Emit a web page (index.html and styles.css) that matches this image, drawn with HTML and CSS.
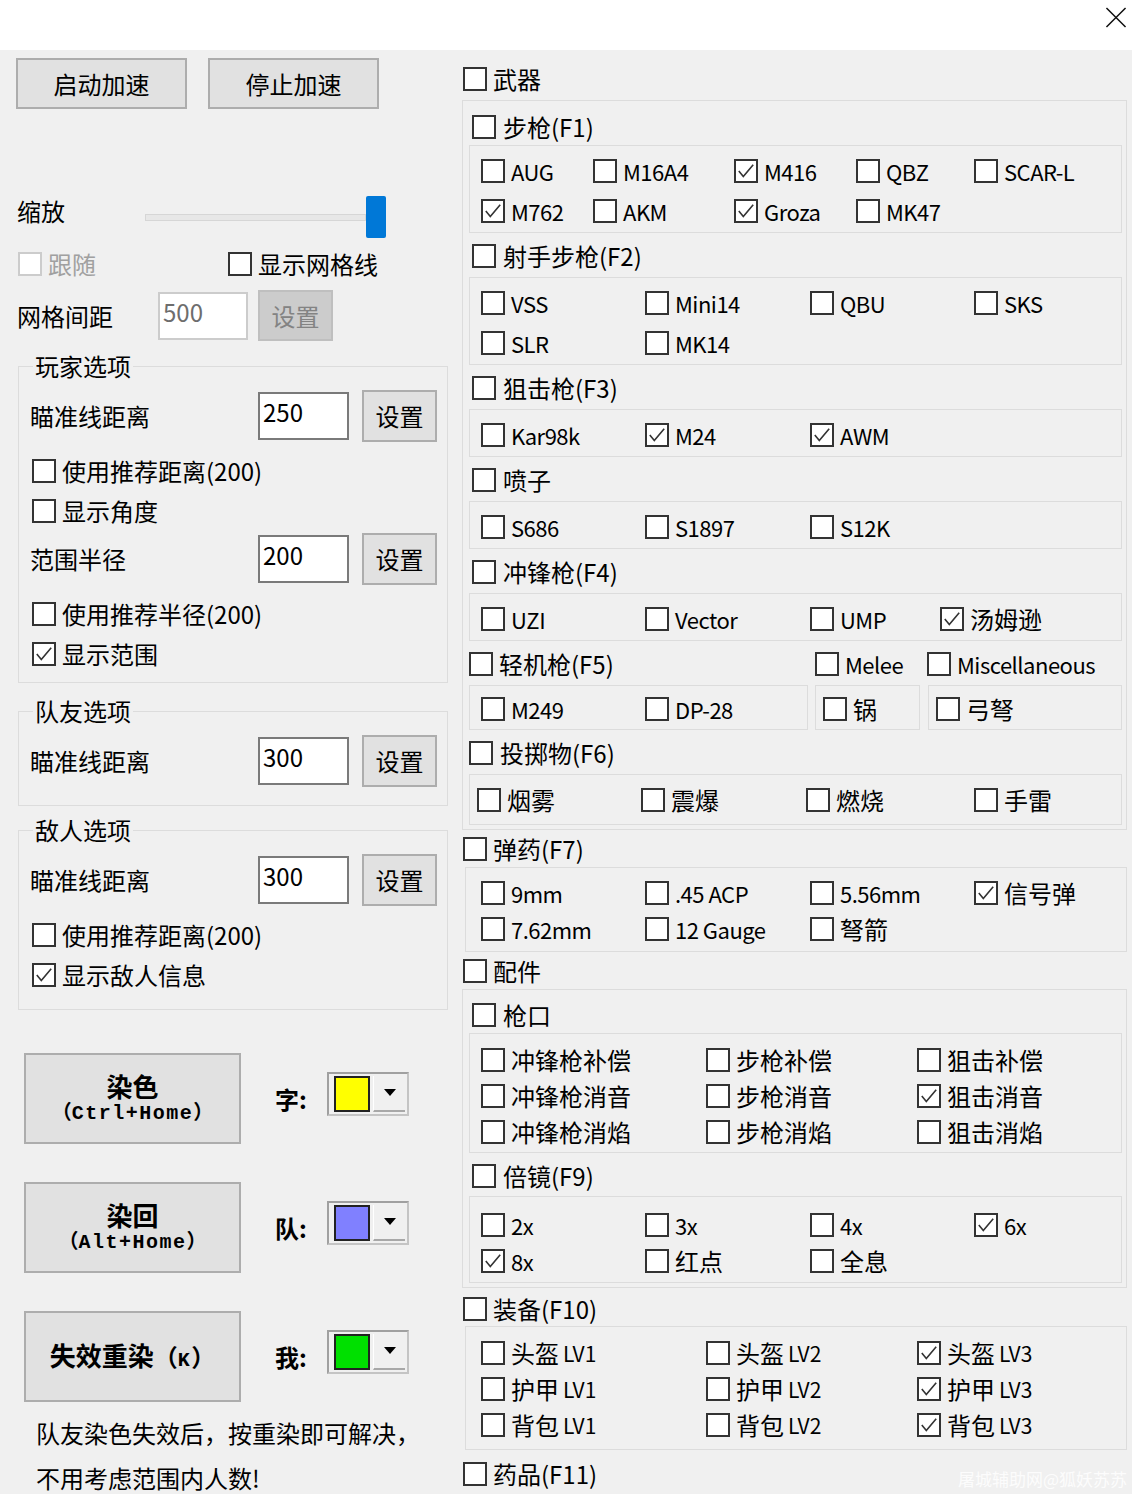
FILE: index.html
```html
<!DOCTYPE html>
<html lang="zh-CN">
<head>
    <meta charset="UTF-8">
    <title>设置</title>
    <link rel="stylesheet" href="styles.css">
</head>
<body>
<div class="titlebar">
    <svg class="close" viewBox="0 0 22 22"><path d="M1 1L21 21M21 1L1 21"/></svg>
</div>
<div class="main">
    <div class="left">
        <div class="speed">
            <button class="btn">启动加速</button>
            <button class="btn">停止加速</button>
        </div>
        <div class="zoom">
            <span class="zoom-label">缩放</span>
            <div class="track"></div>
            <div class="thumb"></div>
        </div>
        <div class="opts">
            <label class="cb off follow"><span class="box"></span>跟随</label>
            <label class="cb"><span class="box"></span>显示网格线</label>
        </div>
        <div class="gridrow">
            <span class="gridrow-label">网格间距</span>
            <div class="input off">500</div>
            <button class="btn off">设置</button>
        </div>

        <fieldset class="group player">
            <legend>玩家选项</legend>
            <div class="field"><span class="field-label">瞄准线距离</span><div class="input">250</div><button class="btn">设置</button></div>
            <label class="cb line"><span class="box"></span>使用推荐距离(200)</label>
            <label class="cb line"><span class="box"></span>显示角度</label>
            <div class="field"><span class="field-label">范围半径</span><div class="input">200</div><button class="btn">设置</button></div>
            <label class="cb line"><span class="box"></span>使用推荐半径(200)</label>
            <label class="cb line"><span class="box"><svg viewBox="0 0 20 20"><path d="M2 10l5 6 11-13"/></svg></span>显示范围</label>
        </fieldset>

        <fieldset class="group team">
            <legend>队友选项</legend>
            <div class="field"><span class="field-label">瞄准线距离</span><div class="input">300</div><button class="btn">设置</button></div>
        </fieldset>

        <fieldset class="group enemy">
            <legend>敌人选项</legend>
            <div class="field"><span class="field-label">瞄准线距离</span><div class="input">300</div><button class="btn">设置</button></div>
            <label class="cb line"><span class="box"></span>使用推荐距离(200)</label>
            <label class="cb line"><span class="box"><svg viewBox="0 0 20 20"><path d="M2 10l5 6 11-13"/></svg></span>显示敌人信息</label>
        </fieldset>

        <div class="paint first">
            <button class="btn paint-btn"><span class="l1">染色</span><span class="l2">（<span class="mono">Ctrl+Home</span>）</span></button>
            <span class="tag">字:</span>
            <div class="combo"><span class="swatch yellow"></span><span class="drop"></span></div>
        </div>
        <div class="paint">
            <button class="btn paint-btn"><span class="l1">染回</span><span class="l2">（<span class="mono">Alt+Home</span>）</span></button>
            <span class="tag">队:</span>
            <div class="combo"><span class="swatch blue"></span><span class="drop"></span></div>
        </div>
        <div class="paint">
            <button class="btn paint-btn"><span class="l1">失效重染<span class="l2">（<span class="mono">K</span>）</span></span></button>
            <span class="tag">我:</span>
            <div class="combo"><span class="swatch green"></span><span class="drop"></span></div>
        </div>
        <div class="note">队友染色失效后，按重染即可解决，<br>不用考虑范围内人数!</div>
    </div>

    <div class="right">
        <label class="cb head top-head"><span class="box"></span>武器</label>
        <div class="outer">
            <label class="cb head sec-head first"><span class="box"></span>步枪(F1)</label>
            <div class="pane cols-f1 first">
                <label class="cb en"><span class="box"></span>AUG</label>
                <label class="cb en"><span class="box"></span>M16A4</label>
                <label class="cb en"><span class="box"><svg viewBox="0 0 20 20"><path d="M2 10l5 6 11-13"/></svg></span>M416</label>
                <label class="cb en"><span class="box"></span>QBZ</label>
                <label class="cb en"><span class="box"></span>SCAR-L</label>
                <label class="cb en"><span class="box"><svg viewBox="0 0 20 20"><path d="M2 10l5 6 11-13"/></svg></span>M762</label>
                <label class="cb en"><span class="box"></span>AKM</label>
                <label class="cb en"><span class="box"><svg viewBox="0 0 20 20"><path d="M2 10l5 6 11-13"/></svg></span>Groza</label>
                <label class="cb en"><span class="box"></span>MK47</label>
            </div>

            <label class="cb head sec-head"><span class="box"></span>射手步枪(F2)</label>
            <div class="pane cols-4">
                <label class="cb en"><span class="box"></span>VSS</label>
                <label class="cb en"><span class="box"></span>Mini14</label>
                <label class="cb en"><span class="box"></span>QBU</label>
                <label class="cb en"><span class="box"></span>SKS</label>
                <label class="cb en"><span class="box"></span>SLR</label>
                <label class="cb en"><span class="box"></span>MK14</label>
            </div>

            <label class="cb head sec-head"><span class="box"></span>狙击枪(F3)</label>
            <div class="pane cols-4">
                <label class="cb en"><span class="box"></span>Kar98k</label>
                <label class="cb en"><span class="box"><svg viewBox="0 0 20 20"><path d="M2 10l5 6 11-13"/></svg></span>M24</label>
                <label class="cb en"><span class="box"><svg viewBox="0 0 20 20"><path d="M2 10l5 6 11-13"/></svg></span>AWM</label>
            </div>

            <label class="cb head sec-head"><span class="box"></span>喷子</label>
            <div class="pane cols-4">
                <label class="cb en"><span class="box"></span>S686</label>
                <label class="cb en"><span class="box"></span>S1897</label>
                <label class="cb en"><span class="box"></span>S12K</label>
            </div>

            <label class="cb head sec-head"><span class="box"></span>冲锋枪(F4)</label>
            <div class="pane cols-f4">
                <label class="cb en"><span class="box"></span>UZI</label>
                <label class="cb en"><span class="box"></span>Vector</label>
                <label class="cb en"><span class="box"></span>UMP</label>
                <label class="cb"><span class="box"><svg viewBox="0 0 20 20"><path d="M2 10l5 6 11-13"/></svg></span>汤姆逊</label>
            </div>

            <div class="head-row">
                <label class="cb head lmg"><span class="box"></span>轻机枪(F5)</label>
                <label class="cb head en melee"><span class="box"></span>Melee</label>
                <label class="cb head en"><span class="box"></span>Miscellaneous</label>
            </div>
            <div class="split">
                <div class="pane small lmg-pane cols-4">
                    <label class="cb en"><span class="box"></span>M249</label>
                    <label class="cb en"><span class="box"></span>DP-28</label>
                </div>
                <div class="pane small pan-pane">
                    <label class="cb"><span class="box"></span>锅</label>
                </div>
                <div class="pane small bow-pane">
                    <label class="cb"><span class="box"></span>弓弩</label>
                </div>
            </div>

            <label class="cb head sec-head flush"><span class="box"></span>投掷物(F6)</label>
            <div class="pane cols-f6 throw">
                <label class="cb"><span class="box"></span>烟雾</label>
                <label class="cb"><span class="box"></span>震爆</label>
                <label class="cb"><span class="box"></span>燃烧</label>
                <label class="cb"><span class="box"></span>手雷</label>
            </div>
        </div>

        <label class="cb head ammo-head"><span class="box"></span>弹药(F7)</label>
        <div class="pane cols-4 ammo">
            <label class="cb en"><span class="box"></span>9mm</label>
            <label class="cb en"><span class="box"></span>.45 ACP</label>
            <label class="cb en"><span class="box"></span>5.56mm</label>
            <label class="cb"><span class="box"><svg viewBox="0 0 20 20"><path d="M2 10l5 6 11-13"/></svg></span>信号弹</label>
            <label class="cb en"><span class="box"></span>7.62mm</label>
            <label class="cb en"><span class="box"></span>12 Gauge</label>
            <label class="cb"><span class="box"></span>弩箭</label>
        </div>

        <label class="cb head part-head"><span class="box"></span>配件</label>
        <div class="outer parts">
            <label class="cb head sec-head muzzle-head"><span class="box"></span>枪口</label>
            <div class="pane cols-3 muzzle">
                <label class="cb"><span class="box"></span>冲锋枪补偿</label>
                <label class="cb"><span class="box"></span>步枪补偿</label>
                <label class="cb"><span class="box"></span>狙击补偿</label>
                <label class="cb"><span class="box"></span>冲锋枪消音</label>
                <label class="cb"><span class="box"></span>步枪消音</label>
                <label class="cb"><span class="box"><svg viewBox="0 0 20 20"><path d="M2 10l5 6 11-13"/></svg></span>狙击消音</label>
                <label class="cb"><span class="box"></span>冲锋枪消焰</label>
                <label class="cb"><span class="box"></span>步枪消焰</label>
                <label class="cb"><span class="box"></span>狙击消焰</label>
            </div>

            <label class="cb head sec-head"><span class="box"></span>倍镜(F9)</label>
            <div class="pane cols-4 scope">
                <label class="cb en"><span class="box"></span>2x</label>
                <label class="cb en"><span class="box"></span>3x</label>
                <label class="cb en"><span class="box"></span>4x</label>
                <label class="cb en"><span class="box"><svg viewBox="0 0 20 20"><path d="M2 10l5 6 11-13"/></svg></span>6x</label>
                <label class="cb en"><span class="box"><svg viewBox="0 0 20 20"><path d="M2 10l5 6 11-13"/></svg></span>8x</label>
                <label class="cb"><span class="box"></span>红点</label>
                <label class="cb"><span class="box"></span>全息</label>
            </div>
        </div>

        <label class="cb head gear-head"><span class="box"></span>装备(F10)</label>
        <div class="pane cols-3 gear">
            <label class="cb"><span class="box"></span>头盔 <span class="lv">LV1</span></label>
            <label class="cb"><span class="box"></span>头盔 <span class="lv">LV2</span></label>
            <label class="cb"><span class="box"><svg viewBox="0 0 20 20"><path d="M2 10l5 6 11-13"/></svg></span>头盔 <span class="lv">LV3</span></label>
            <label class="cb"><span class="box"></span>护甲 <span class="lv">LV1</span></label>
            <label class="cb"><span class="box"></span>护甲 <span class="lv">LV2</span></label>
            <label class="cb"><span class="box"><svg viewBox="0 0 20 20"><path d="M2 10l5 6 11-13"/></svg></span>护甲 <span class="lv">LV3</span></label>
            <label class="cb"><span class="box"></span>背包 <span class="lv">LV1</span></label>
            <label class="cb"><span class="box"></span>背包 <span class="lv">LV2</span></label>
            <label class="cb"><span class="box"><svg viewBox="0 0 20 20"><path d="M2 10l5 6 11-13"/></svg></span>背包 <span class="lv">LV3</span></label>
        </div>

        <label class="cb head med-head"><span class="box"></span>药品(F11)</label>
    </div>
</div>
<div class="watermark">屠城辅助网@狐妖苏苏</div>
</body>
</html>
```

FILE: styles.css
```css
*{
    box-sizing: border-box;
}
body{
    margin: 0;
    width: 1132px;
    height: 1494px;
    overflow: hidden;
    position: relative;
    background: #f0f0f0;
    color: #000;
    font-family: "Noto Sans CJK SC", "Microsoft YaHei", sans-serif;
    font-size: 24px;
    line-height: 30px;
}
.titlebar{
    height: 50px;
    background: #fff;
    display: flex;
    justify-content: flex-end;
    padding: 7px 5px 0 0;
}
.close{
    width: 22px;
    height: 21px;
    fill: none;
    stroke: #111;
    stroke-width: 1.6;
}
.main{
    display: flex;
}
.left{
    width: 460px;
    flex: none;
}
.right{
    width: 672px;
    flex: none;
}

/* buttons & inputs */
.btn{
    font: inherit;
    color: #000;
    background: #e1e1e1;
    border: 2px solid #adadad;
    padding: 0;
}
.btn.off{
    background: #cccccc;
    border-color: #bfbfbf;
    color: #838383;
}
.input{
    width: 91px;
    height: 48px;
    background: #fff;
    border: 2px solid #7a7a7a;
    padding: 0 3px;
    font-size: 24px;
    line-height: 36px;
}
.input.off{
    border-color: #cccccc;
    color: #6d6d6d;
}

/* checkbox */
.cb{
    display: flex;
    align-items: center;
    gap: 6px;
    white-space: nowrap;
}
.cb.en{
    font-size: 22px;
    letter-spacing: -0.5px;
}
.box{
    width: 24px;
    height: 24px;
    flex: none;
    border: 2px solid #333;
    background: #fff;
    display: flex;
    align-items: center;
    justify-content: center;
}
.box svg{
    width: 18px;
    height: 18px;
    fill: none;
    stroke: #333;
    stroke-width: 1.8;
}
.cb.off{
    color: #a0a0a0;
}
.cb.off .box{
    border-color: #cccccc;
}

/* left column */
.speed{
    display: flex;
    gap: 21px;
    margin: 8px 0 0 16px;
}
.speed .btn{
    width: 171px;
    height: 51px;
}
.zoom{
    display: flex;
    align-items: center;
    height: 42px;
    margin-top: 87px;
    padding-left: 17px;
}
.zoom-label{
    width: 128px;
    margin-bottom: 12px;
}
.track{
    width: 221px;
    height: 7px;
    background: #e7e7e7;
    border: 1px solid #d6d6d6;
}
.thumb{
    width: 20px;
    height: 42px;
    background: #0078d7;
    border-radius: 2px;
}
.opts{
    display: flex;
    align-items: center;
    height: 28px;
    margin-top: 12px;
    padding-left: 18px;
}
.follow{
    width: 210px;
}
.gridrow{
    display: flex;
    align-items: center;
    height: 51px;
    margin-top: 12px;
    padding-left: 17px;
}
.gridrow-label{
    width: 141px;
}
.gridrow .input{
    width: 90px;
}
.gridrow .btn{
    width: 75px;
    height: 51px;
    margin-left: 10px;
}

.group{
    margin: 0 0 0 18px;
    width: 430px;
    min-width: 0;
    border: 1px solid #dcdcdc;
    padding: 8px 9px 8px 11px;
}
.group legend{
    padding: 0 2px;
    margin-left: 3px;
    line-height: 32px;
}
.player{
    margin-top: 9px;
}
.team{
    margin-top: 12px;
    padding-bottom: 18px;
}
.enemy{
    margin-top: 8px;
    padding-bottom: 14px;
}
.field{
    display: flex;
    align-items: center;
    height: 52px;
}
.field-label{
    width: 228px;
}
.field .btn{
    width: 75px;
    height: 52px;
    margin-left: 13px;
}
.line{
    height: 40px;
    margin-left: 2px;
}
.field + .line{
    margin-top: 9px;
}
.line + .field{
    margin-top: 2px;
}

.paint{
    display: flex;
    align-items: center;
    margin: 38px 0 0 24px;
}
.paint.first{
    margin-top: 43px;
}
.paint-btn{
    width: 217px;
    height: 91px;
    font-weight: 700;
}
.l1{
    display: block;
    font-size: 26px;
    line-height: 27px;
}
.l2{
    display: block;
    font-size: 20px;
    line-height: 24px;
}
.l1 .l2{
    display: inline;
    font-size: 24px;
}
.mono{
    font-family: "Liberation Mono", monospace;
    font-size: 20px;
    letter-spacing: 1.5px;
}
.tag{
    width: 52px;
    margin-left: 34px;
    font-weight: 700;
}
.combo{
    width: 82px;
    height: 44px;
    margin-bottom: 10px;
    display: flex;
    align-items: center;
    border: 2px solid #a0a0a0;
    border-right-color: #c4c4c4;
    border-bottom-color: #c4c4c4;
    background: #f0f0f0;
    padding: 0 2px 0 5px;
}
.swatch{
    width: 36px;
    height: 36px;
    border: 2px solid #222;
}
.yellow{ background: #ffff00; }
.blue{ background: #8080ff; }
.green{ background: #00e000; }
.drop{
    flex: 1;
    height: 36px;
    margin-left: 3px;
    border-left: 1px solid #fff;
    border-bottom: 2px solid #a8a8a8;
    display: flex;
    align-items: center;
    justify-content: center;
}
.drop::after{
    content: "";
    border-left: 6px solid transparent;
    border-right: 6px solid transparent;
    border-top: 7px solid #000;
}
.note{
    margin-top: 8px;
    padding-left: 36px;
    line-height: 45px;
}

/* right column */
.head{
    height: 30px;
}
.top-head{
    margin: 14px 0 0 3px;
}
.outer{
    margin: 6px 5px 0 2px;
    border: 1px solid #dcdcdc;
    padding: 0 4px 4px 6px;
}
.sec-head{
    margin: 8px 0 0 3px;
    gap: 7px;
}
.sec-head.first{
    margin-top: 11px;
}
.sec-head.flush{
    margin-left: 0;
}
.pane{
    border: 1px solid #dcdcdc;
    margin-top: 6px;
    padding: 5px 0 1px 11px;
    display: grid;
    grid-auto-rows: 40px;
    align-items: center;
}
.pane.first{
    margin-top: 3px;
}
.cols-f1{ grid-template-columns: 112px 141px 122px 118px auto; }
.cols-4{ grid-template-columns: 164px 165px 164px auto; }
.cols-f4{ grid-template-columns: 164px 165px 130px auto; }
.cols-f6{ grid-template-columns: 164px 165px 168px auto; }
.cols-3{ grid-template-columns: 225px 211px auto; }

.head-row{
    display: flex;
    margin-top: 8px;
}
.lmg{
    width: 346px;
}
.melee{
    width: 112px;
}
.split{
    display: flex;
}
.pane.small{
    padding-top: 3px;
    padding-bottom: 0;
}
.lmg-pane{
    width: 339px;
}
.pan-pane{
    width: 105px;
    margin-left: 7px;
    padding-left: 7px;
}
.bow-pane{
    width: 194px;
    margin-left: 8px;
    padding-left: 7px;
}
.throw{
    padding-left: 7px;
    padding-bottom: 4px;
}

.ammo-head{
    margin: 4px 0 0 3px;
}
.ammo{
    margin: 3px 5px 0 5px;
    padding: 7px 0 4px 15px;
    grid-auto-rows: 36px;
}
.part-head{
    margin: 4px 0 0 3px;
}
.parts{
    margin-top: 3px;
}
.muzzle-head{
    margin-top: 10px;
}
.muzzle{
    margin-top: 3px;
    padding: 8px 0 2px 11px;
    grid-auto-rows: 36px;
}
.scope{
    margin-top: 5px;
    padding: 10px 0 3px 11px;
    grid-auto-rows: 36px;
}
.gear-head{
    margin: 6px 0 0 3px;
}
.gear{
    margin: 2px 5px 0 5px;
    padding: 8px 0 6px 15px;
    grid-auto-rows: 36px;
}
.lv{
    font-size: 21px;
    margin-left: -2px;
}
.med-head{
    margin: 9px 0 0 3px;
}

.watermark{
    position: absolute;
    right: 5px;
    bottom: 3px;
    font-size: 17px;
    line-height: 24px;
    color: rgba(255, 255, 255, 0.85);
}
```
